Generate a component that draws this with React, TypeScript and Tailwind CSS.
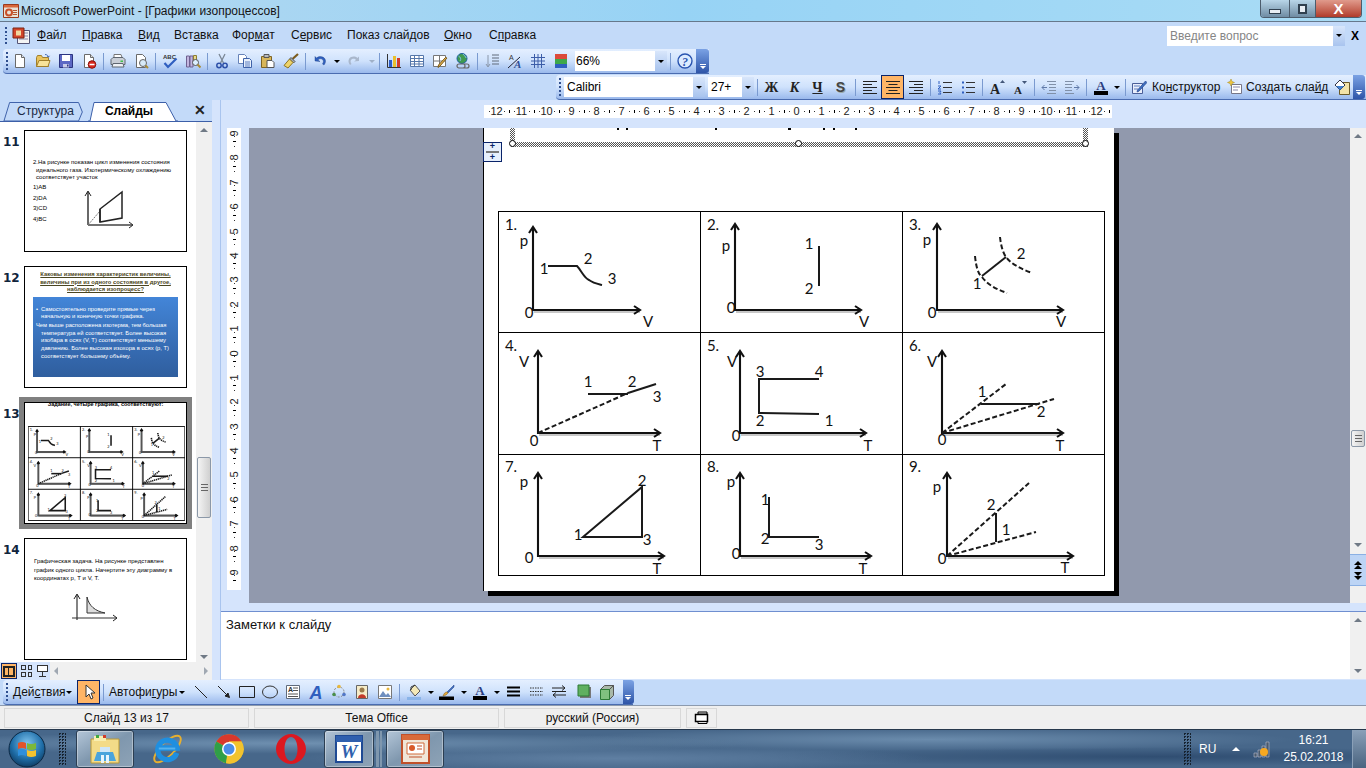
import React from "react";

type TextItem = [number, number, string];
type Cell = {
  x: number; y: number; h: number; ax: number; top: number; ay: number; right: number;
  t: TextItem[]; solid: string[]; dash: string[];
};

const cells: Cell[] = [
  { x: 499, y: 212, h: 120, ax: 533, top: 227, ay: 310, right: 640,
    t: [[511, 230, "1."], [524, 246, "p"], [544, 274, "1"], [588, 264, "2"], [612, 284, "3"], [529, 318, "0"], [648, 327, "V"]],
    solid: ["M548 266H577C581 270 584 278 589 280C593 283 598 284 602 285"], dash: [] },
  { x: 701, y: 212, h: 120, ax: 735, top: 224, ay: 310, right: 861,
    t: [[713, 230, "2."], [726, 251, "p"], [809, 249, "1"], [809, 294, "2"], [731, 313, "0"], [864, 327, "V"]],
    solid: ["M819 246V286"], dash: [] },
  { x: 903, y: 212, h: 120, ax: 937, top: 224, ay: 310, right: 1063,
    t: [[915, 230, "3."], [927, 245, "p"], [977, 289, "1"], [1021, 259, "2"], [932, 318, "0"], [1061, 327, "V"]],
    solid: ["M982 276L1006 257"],
    dash: ["M975 256C976 266 978 274 982 277C988 285 996 289 1007 293", "M1000 237C1001 246 1003 253 1006 257C1012 265 1022 269 1032 273"] },
  { x: 499, y: 333, h: 121, ax: 538, top: 351, ay: 433, right: 660,
    t: [[511, 351, "4."], [524, 367, "V"], [534, 446, "0"], [657, 451, "T"], [588, 387, "1"], [632, 387, "2"], [657, 402, "3"]],
    solid: ["M588 394H628", "M628 393L656 384"], dash: ["M538 433L628 393"] },
  { x: 701, y: 333, h: 121, ax: 740, top: 351, ay: 433, right: 866,
    t: [[713, 351, "5."], [732, 367, "V"], [736, 441, "0"], [868, 451, "T"], [760, 377, "3"], [819, 377, "4"], [760, 426, "2"], [829, 426, "1"]],
    solid: ["M819 379H759V413L819 414"], dash: [] },
  { x: 903, y: 333, h: 121, ax: 942, top: 351, ay: 433, right: 1063,
    t: [[915, 351, "6."], [932, 367, "V"], [942, 445, "0"], [1060, 451, "T"], [982, 397, "1"], [1041, 417, "2"]],
    solid: ["M981 404H1039"], dash: ["M942 433L1006 384", "M942 433L1054 399"] },
  { x: 499, y: 455, h: 120, ax: 538, top: 473, ay: 556, right: 664,
    t: [[511, 472, "7."], [524, 487, "p"], [529, 563, "0"], [657, 574, "T"], [578, 540, "1"], [642, 486, "2"], [647, 545, "3"]],
    solid: ["M583 537L642 487V537Z"], dash: [] },
  { x: 701, y: 455, h: 120, ax: 740, top: 473, ay: 556, right: 871,
    t: [[713, 472, "8."], [731, 487, "p"], [736, 559, "0"], [863, 574, "T"], [765, 505, "1"], [765, 544, "2"], [819, 550, "3"]],
    solid: ["M769 497V537H819"], dash: [] },
  { x: 903, y: 455, h: 120, ax: 947, top: 473, ay: 556, right: 1073,
    t: [[915, 472, "9."], [937, 492, "p"], [942, 564, "0"], [1065, 573, "T"], [991, 510, "2"], [1006, 535, "1"]],
    solid: ["M996 513V542"], dash: ["M947 556L1029 483", "M947 556L1036 532"] },
];

function Plot({ c, thumb }: { c: Cell; thumb?: boolean }) {
  const k = thumb ? 3.6 : 1;
  const l = thumb ? 3 : 1;
  return (
    <g fill="none">
      <path d={`M${c.ax + 1} ${c.ay + 2}H${c.right}`} stroke="#b5b5b5" strokeWidth={1.5 * k} />
      <path d={`M${c.ax} ${c.top}V${c.ay}H${c.right}`} stroke={thumb ? "#555" : "#111"} strokeWidth={2.1 * k} />
      <path d={`M${c.ax - 4} ${c.top + 6}L${c.ax} ${c.top}L${c.ax + 4} ${c.top + 6}M${c.right - 6} ${c.ay - 4}L${c.right} ${c.ay}L${c.right - 6} ${c.ay + 4}`} stroke="#111" strokeWidth={2.1 * k} />
      {c.solid.map((d, i) => <path key={i} d={d} stroke="#1a1a1a" strokeWidth={2 * l} />)}
      {c.dash.map((d, i) => <path key={i} d={d} stroke="#1a1a1a" strokeWidth={2 * l} strokeDasharray="5 2.5" />)}
      {c.t.map(([x, y, s], i) => (
        <text key={i} x={x} y={y} textAnchor="middle" fontSize={15} fill="#111" stroke="none" fontFamily="Lato, sans-serif">{s}</text>
      ))}
    </g>
  );
}

function SlideTable() {
  return (
    <div className="grid w-[607px] grid-cols-[202px_202px_202px] grid-rows-[121px_122px_121px] border-l border-t border-black">
      {cells.map((c, i) => (
        <div key={i} className="border-b border-r border-black">
          <svg className="block h-full w-full" viewBox={`${c.x} ${c.y} 201 ${c.h}`}><Plot c={c} /></svg>
        </div>
      ))}
    </div>
  );
}

function ThumbTable() {
  return (
    <svg className="block h-[95px] w-[157px]" viewBox="498 211 607 365">
      <path d="M498.5 211.5H1104.5V575.5H498.5ZM700.5 211V575M902.5 211V575M498 332.5H1105M498 454.5H1105" fill="none" stroke="#000" strokeWidth="3.6" />
      {cells.map((c, i) => <Plot key={i} c={c} thumb />)}
    </svg>
  );
}

const Ic = ({ children, s = 16 }: { children: React.ReactNode; s?: number }) => (
  <svg width={s} height={s} viewBox="0 0 16 16" className="block shrink-0">{children}</svg>
);

const Page = ({ f = "#fff" }: { f?: string }) => <path d="M3.5 1.5h6l3 3v10h-9z" fill={f} stroke="#6a6a6a" />;

const icons: Record<string, React.ReactNode> = {
  new: <><Page /><path d="M9.5 1.5v3h3" fill="#dfe6f2" stroke="#6a6a6a" /></>,
  open: <><path d="M1.5 4.5l1-2h4l1 2h6v9h-12z" fill="#e9c35c" stroke="#a17f2b" /><path d="M1.5 13.5l2.5-6h11l-2 6z" fill="#f8e39a" stroke="#a17f2b" /><path d="M10 1.5c2 0 3 1 3.5 2.5M13.5 4l1-1.2M13.5 4l-1.4-.5" fill="none" stroke="#4b6fb5" /></>,
  save: <><path d="M1.5 1.5h13v13h-13z" fill="#5c68c4" stroke="#2c3580" /><path d="M4 2h8v6H4z" fill="#fff" /><path d="M5 11h6v3.500H5z" fill="#c8cce8" /><path d="M9 11.500h1.500v2H9z" fill="#2c3580" /></>,
  perm: <><Page /><path d="M9.500 1.500v3h3" fill="#ddd" stroke="#6a6a6a" /><circle cx="11" cy="11.500" r="3.800" fill="#d9281e" stroke="#8a120c" /><path d="M8.500 11.500h5" stroke="#fff" strokeWidth="1.500" /></>,
  print: <><path d="M4 1.500h7l1 3H4z" fill="#fff" stroke="#777" /><path d="M1 6.500l2-2h10l2 2v5H1z" fill="#c9ced6" stroke="#5f6670" /><path d="M3 10.500h10l1 3.500H2z" fill="#eef1f5" stroke="#5f6670" /><path d="M10.500 7.500h2.500v1.500h-2.500z" fill="#42c24a" /></>,
  preview: <><Page /><circle cx="10" cy="10" r="3.500" fill="#d7eaf8" stroke="#666" /><path d="M12.500 12.500l2.500 2.500" stroke="#a98b35" strokeWidth="2" /></>,
  spell: <><text x="1" y="5.500" fontSize="6" fontFamily="Liberation Sans" fill="#333" fontWeight="700">ABC</text><path d="M2.500 10l3.500 4L14.500 5.500" fill="none" stroke="#2f5fc0" strokeWidth="2.200" /></>,
  research: <><path d="M1.500 3h3v11h-3zM5 3h3v11H5z" fill="#c3b6e0" stroke="#6f6190" /><path d="M8.500 2.500h3v5h-3z" fill="#e8d88f" stroke="#8d7d30" /><circle cx="10.500" cy="9.500" r="3" fill="#dcefff" stroke="#555" /><path d="M12.500 11.500l3 3" stroke="#a98b35" strokeWidth="2" /></>,
  cut: <><path d="M5 1l4.500 9M11 1L6.500 10" stroke="#7b8794" strokeWidth="1.300" fill="none" /><circle cx="5" cy="12.500" r="2.200" fill="none" stroke="#2d50a8" strokeWidth="1.500" /><circle cx="11" cy="12.500" r="2.200" fill="none" stroke="#2d50a8" strokeWidth="1.500" /></>,
  copy: <><path d="M1.500 1.500h6l2 2v7h-8z" fill="#fff" stroke="#6783b8" /><path d="M6.500 5.500h6l2 2v7h-8z" fill="#e8f0fc" stroke="#3f62a8" /><path d="M8 9h5M8 11h5M8 13h5" stroke="#5c7fc0" /></>,
  paste: <><path d="M1.500 3.500h10v11h-10z" fill="#d8b65a" stroke="#7e6423" /><path d="M4 1.500h5v3H4z" fill="#bbb" stroke="#555" /><path d="M7 7.500h5l2 2v5H7z" fill="#fff" stroke="#555" /></>,
  brush: <><path d="M15 1l-5.500 5" stroke="#7c5c1e" strokeWidth="2.200" /><path d="M8 4.500l4 4-1.500 1.500-4-4z" fill="#a3abb8" stroke="#555" /><path d="M6.500 6l3.500 3.500L5 15 1 12.500z" fill="#eed36a" stroke="#8c7423" /></>,
  undo: <path d="M3 8V3.500L4.500 5C7 3 11 3 13 6c1 2 .5 4-1 6l-1.500-1c1-1.500 1.200-3 .5-4-1-1.500-4-1.800-5 0L8 8.500z" fill="#2f5fbe" stroke="#1d3e86" strokeWidth=".4" />,
  redo: <path d="M13 8V3.500L11.500 5C9 3 5 3 3 6c-1 2-.5 4 1 6l1.500-1c-1-1.500-1.200-3-.5-4 1-1.500 4-1.800 5 0L8 8.500z" fill="#a9b7cc" />,
  chart: <><path d="M1.500 1v13.500H15" fill="none" stroke="#333" /><path d="M3 7h3v7H3z" fill="#2c5dc9" /><path d="M7 3h3v11H7z" fill="#e8c02f" /><path d="M11 5h3v9h-3z" fill="#d23c28" /></>,
  table: <path d="M1.500 2.500h13v11h-13zM1.500 5.500h13M1.500 8.500h13M1.500 11h13M5.500 2.500v11M10 2.500v11" fill="#fff" stroke="#5577aa" />,
  tableb: <><path d="M1.500 2.500h12v11h-12zM1.500 8h12M7.500 2.500v11" fill="#fff" stroke="#777" /><path d="M15 5l-7 8-2 1.500.5-2.500 7-7.500z" fill="#e8b44b" stroke="#7a5b1e" /></>,
  link: <><circle cx="7" cy="5.500" r="5" fill="#3f9a4f" stroke="#1f5fa0" /><path d="M3.500 3c2 1 3 3 1.500 5M8 1c1 2 3 2 3 4" stroke="#7ec0e8" fill="none" /><path d="M4 11h4a2 2 0 010 4H4a2 2 0 010-4zM8 11h4a2 2 0 010 4H8" fill="none" stroke="#666" strokeWidth="1.200" /></>,
  expand: <><path d="M4 2v11M2 11l2 3 2-3" fill="none" stroke="#8a97aa" /><path d="M8 2h7M8 5h7M8 8h7M8 11h7" stroke="#606a7a" /></>,
  showf: <><text x="2" y="6.500" fontSize="7" fontFamily="Liberation Sans" fill="#333">A</text><text x="7" y="14.500" fontSize="11" fontStyle="italic" fontWeight="700" fontFamily="Liberation Serif" fill="#2f4f96">A</text><path d="M1 15L13 4" stroke="#223" /></>,
  grid: <path d="M1 4.500h14M1 8h14M1 11.500h14M4.500 1v14M8 1v14M11.500 1v14" stroke="#3c5da8" fill="none" />,
  color: <><path d="M2 1h12v5H2z" fill="#dc4a3a" /><path d="M2 6h12v5H2z" fill="#3ea84a" /><path d="M2 11h12v4H2z" fill="#2f5fc0" /></>,
  help: <><circle cx="8" cy="8" r="7" fill="#dcebff" stroke="#2a55b0" strokeWidth="1.400" /><text x="8" y="12.500" textAnchor="middle" fontSize="12" fontWeight="700" fontStyle="italic" fontFamily="Liberation Serif" fill="#2a55b0">?</text></>,
  left: <path d="M1 2.500h14M1 5.500h9M1 8.500h14M1 11.500h9M1 14.500h14" stroke="#222" fill="none" />,
  center: <path d="M1 2.500h14M3.500 5.500h9M1 8.500h14M3.500 11.500h9M1 14.500h14" stroke="#222" fill="none" />,
  right: <path d="M1 2.500h14M6 5.500h9M1 8.500h14M6 11.500h9M1 14.500h14" stroke="#222" fill="none" />,
  num: <><path d="M6 3.500h9M6 8.500h9M6 13.500h9" stroke="#333" /><path d="M2 2v3M1 7h3l-3 3h3M1 12h3l-1 1.500 1 1.500H1" stroke="#2f5fc0" fill="none" /></>,
  bul: <><path d="M6 3.500h9M6 8.500h9M6 13.500h9" stroke="#333" /><path d="M2 2.500h2v2H2zM2 7.500h2v2H2zM2 12.500h2v2H2z" fill="#2f5fc0" /></>,
  ainc: <><text x="1" y="14.500" fontSize="14" fontWeight="700" fontFamily="Liberation Serif" fill="#222">A</text><path d="M11 4l2.500-3L16 4z" fill="#44587a" /></>,
  adec: <><text x="2" y="14.500" fontSize="11" fontWeight="700" fontFamily="Liberation Serif" fill="#222">A</text><path d="M10 2l2.500 3L15 2z" fill="#44587a" /></>,
  out: <><path d="M6 2.500h9M8 5.500h7M8 8.500h7M8 11.500h7M6 14.500h9" stroke="#8090a8" /><path d="M6 8.500L1 8.500M3.500 6L1 8.500 3.500 11" stroke="#5f79a8" fill="none" /></>,
  ind: <><path d="M1 2.500h9M1 5.500h7M1 8.500h7M1 11.500h7M1 14.500h9" stroke="#8090a8" /><path d="M10 8.500h5M12.500 6L15 8.500 12.500 11" stroke="#5f79a8" fill="none" /></>,
  fontc: <><text x="8" y="11" textAnchor="middle" fontSize="13" fontWeight="700" fontFamily="Liberation Serif" fill="#2a3d80">A</text><path d="M1 12h14v4H1z" fill="#000" /></>,
  design: <><path d="M1.500 4.500h10v10h-10z" fill="#e9eefb" stroke="#4a5f99" /><path d="M3 7h6M3 10h4" stroke="#5c7fc0" /><path d="M14.500 2L6.500 11l-.5 2 2-.8 8-8.700z" fill="#3f6fbe" stroke="#1e3e86" strokeWidth=".6" /></>,
  newsl: <><path d="M4.500 5.500h10v9h-10z" fill="#fff" stroke="#778" /><path d="M6 8h7M6 11h5" stroke="#88a" /><path d="M4 0l1 2.500L7.500 3.500 5 4.500 4 7 3 4.500.5 3.500 3 2.500z" fill="#f0c63c" stroke="#a78a20" strokeWidth=".5" /></>,
  scheme: <><path d="M5.500 3.500h10v12h-10z" fill="#f3e3a8" stroke="#6a5a2a" /><path d="M1 6l5-5 5 5-5 5z" fill="#fff" stroke="#334" /><path d="M2 7l4 4 4-4z" fill="#3f7fd0" /></>,
  fillp: <><path d="M4 6l5-5 5 6-5 5z" fill="#f3e9b8" stroke="#555" /><path d="M9 1L5 3v3" fill="none" stroke="#333" /><path d="M1 13h14v3H1z" fill="#8ab4e8" /></>,
  linec: <><path d="M15 1L8 8l1 1 6-6z" fill="#3f6fbe" stroke="#1e3e86" strokeWidth=".5" /><path d="M8 8c-2 0-3 1.500-4 4 2.500-.5 4-1.500 5-3z" fill="#e3a93c" stroke="#805a15" strokeWidth=".5" /><path d="M0 12.500h15V16H0z" fill="#000" /></>,
  lines: <path d="M2 3.500h13M2 7.500h13M2 11.500h13" stroke="#000" strokeWidth="2.200" />,
  dashes: <path d="M2 4h13M2 7.500h13M2 11h13" stroke="#333" strokeDasharray="1.500 1" />,
  arrows: <path d="M1 4h13M11 1.500L14 4l-3 2.500M15 11H2M5 8.500L2 11l3 2.500M1 7.500h14" stroke="#222" fill="none" />,
  shadow: <><path d="M4 3h11v11H4z" fill="#777" /><path d="M2 1h11v11H2z" fill="#60b060" stroke="#2c7a35" /></>,
  d3: <><path d="M1.500 5.500l4-4h9l-4 4zM10.500 5.500l4-4v10l-4 4z" fill="#a8b8a8" stroke="#555" /><path d="M1.500 5.500h9v10h-9z" fill="#7fc07f" stroke="#2c7a35" /></>,
  straight: <path d="M2 2l12 12" stroke="#222" fill="none" />,
  arrow: <path d="M2 2l11 11M13.500 13.500L9 12l3-3z" stroke="#222" fill="#222" />,
  rect: <path d="M.5 2.500h15v11H.5z" fill="none" stroke="#222" />,
  ell: <ellipse cx="8" cy="8" rx="7.500" ry="6" fill="none" stroke="#333" />,
  textb: <><path d="M1.500 1.500h13v13h-13z" fill="#fff" stroke="#5f6b7c" /><text x="3" y="8" fontSize="7" fontWeight="700" fontFamily="Liberation Sans" fill="#333">A</text><path d="M8 4h5M8 6.500h5M3 10h10M3 12.500h10" stroke="#555" /></>,
  word: <text x="8" y="14.500" textAnchor="middle" fontSize="18" fontWeight="700" fontStyle="italic" fontFamily="Liberation Sans" fill="#2f5fbe">A</text>,
  diag: <><circle cx="8" cy="8" r="5" fill="none" stroke="#888" strokeDasharray="2 1.500" /><circle cx="8" cy="2.500" r="1.800" fill="#e8b73c" /><circle cx="3" cy="10.500" r="1.800" fill="#4a8f4a" /><circle cx="13" cy="10.500" r="1.800" fill="#5277c8" /></>,
  clip: <><path d="M2.500 1.500h11v13h-11z" fill="#f6ecc8" stroke="#666" /><circle cx="8" cy="6" r="2.500" fill="#9a7a4a" /><path d="M4 14c0-5 8-5 8 0z" fill="#c23a2a" /></>,
  pic: <><path d="M1.500 1.500h13v13h-13z" fill="#fff" stroke="#777" /><path d="M2 13l4-6 3 4 2-2 3 4z" fill="#6f8fbf" /><circle cx="11" cy="5" r="1.500" fill="#e8b73c" /></>,
  pointer: <path d="M5 1v12l3-3 2 5 2-1-2-5h4z" fill="#fff" stroke="#333" />,
};

const I = ({ n }: { n: string }) => <Ic>{icons[n]}</Ic>;
const B = ({ n }: { n: string }) => <div className="flex h-full w-[23px] shrink-0 items-center justify-center"><I n={n} /></div>;
const S = () => <div className="flex h-full w-[6px] shrink-0 items-center justify-center"><div className="h-[17px] w-px bg-[#7a9ad0]" /></div>;
const D = ({ dim }: { dim?: boolean }) => (
  <div className="flex h-full w-[10px] shrink-0 items-center justify-center">
    <div className={`h-0 w-0 border-x-[3px] border-t-[3px] border-x-transparent ${dim ? "border-t-[#9fb0c8]" : "border-t-black"}`} />
  </div>
);
const Grip = () => (
  <div className="flex h-full w-[5.5px] shrink-0 flex-col items-center justify-center gap-[2px] pl-[2px]">
    {[0, 1, 2, 3, 4].map((i) => <div key={i} className="h-[2px] w-[2px] bg-[#2f4f8f]" />)}
  </div>
);
const Chevron = ({ w }: { w: string }) => (
  <div className={`flex h-full ${w} shrink-0 flex-col items-center justify-end gap-[1px] rounded-r-[3px] bg-gradient-to-b from-[#7ba2e4] to-[#2f55a8] pb-[4px]`}>
    <div className="h-px w-[6px] bg-white" />
    <div className="h-0 w-0 border-x-[3px] border-t-[3px] border-x-transparent border-t-white" />
  </div>
);
const barBg = "bg-gradient-to-b from-[#e4efff] via-[#cfe2fc] to-[#9ab9ec] border-b border-[#4a6cb0]";

const ComboArrow = () => (
  <div className="flex h-full w-[12px] shrink-0 items-center justify-center bg-gradient-to-b from-[#d8e6fb] to-[#a9c4ee]">
    <div className="h-0 w-0 border-x-[3px] border-t-[3px] border-x-transparent border-t-black" />
  </div>
);

const U = ({ children }: { children: React.ReactNode }) => <span className="underline">{children}</span>;

function TitleBar() {
  return (
    <div className="flex h-[22px] items-start border-b border-[#66788c] bg-gradient-to-r from-[#b5d8f0] via-[#97d3f5] to-[#a9dcf5] pr-[4px]">
      <svg width="16" height="16" viewBox="0 0 16 16" className="ml-[3px] mt-[3px] block shrink-0">
        <path d="M.5 1.500h15v13H.5z" fill="#e9e2d6" stroke="#9a3a1c" />
        <path d="M1 2h14v2.500H1z" fill="#d9673a" />
        <circle cx="6" cy="9.500" r="3" fill="none" stroke="#c8502a" strokeWidth="2" />
        <path d="M10 7.500h4M10 9.500h4M10 11.500h4" stroke="#b5542e" />
      </svg>
      <div className="ml-[2px] mt-[2px] text-[12px] leading-[18px] text-[#141414]">Microsoft PowerPoint - [Графики изопроцессов]</div>
      <div className="ml-auto flex h-[18px] w-[102px] overflow-hidden rounded-b-[4px] border border-t-0 border-[#4c5c6c]">
        <div className="flex w-[28px] items-center justify-center bg-gradient-to-b from-[#b9d6e8] to-[#6f8ca3]"><div className="mt-[5px] h-[5px] w-[12px] border border-[#30404f] bg-[#e8eef4]" /></div>
        <div className="flex w-[27px] items-center justify-center border-x border-[#4c5c6c] bg-gradient-to-b from-[#b9d6e8] to-[#6f8ca3]"><div className="h-[10px] w-[9px] border-2 border-[#30404f] bg-[#e8eef4]" /></div>
        <div className="flex flex-1 items-center justify-center bg-gradient-to-b from-[#e09a8c] to-[#b03a2a] text-[15px] font-bold leading-none text-white">X</div>
      </div>
    </div>
  );
}

function MenuBar() {
  const m: [React.ReactNode, string][] = [
    [<><U>Ф</U>айл</>, "w-[45px]"],
    [<><U>П</U>равка</>, "w-[56px]"],
    [<><U>В</U>ид</>, "w-[36px]"],
    [<>Вст<U>а</U>вка</>, "w-[58px]"],
    [<>Фор<U>м</U>ат</>, "w-[59px]"],
    [<>С<U>е</U>рвис</>, "w-[56px]"],
    [<>Показ слай<U>д</U>ов</>, "w-[97px]"],
    [<><U>О</U>кно</>, "w-[45px]"],
    [<>С<U>п</U>равка</>, "w-[60px]"],
  ];
  return (
    <div className="flex h-[27px] items-center bg-[#c3daf9] text-[12px] text-[#111]">
      <div className="ml-[2px] mr-[4px] h-[17px]"><Grip /></div>
      <svg width="18" height="17" viewBox="0 0 18 17" className="block shrink-0">
        <path d="M5.500 3.500h12v13h-12z" fill="#f4f4f4" stroke="#557" />
        <path d="M7 6h9M7 9h9M7 12h9" stroke="#88a" />
        <path d="M1 1h11v10H1z" fill="#d2452a" stroke="#7a2414" />
        <path d="M4 3.500h5v5H4z" fill="#f2d9a0" />
      </svg>
      <div className="ml-[7.500px] flex pb-[2px]">
        {m.map(([t, w], i) => <div key={i} className={w}>{t}</div>)}
      </div>
      <div className="ml-auto flex h-[20px] w-[178px] items-center bg-white pl-[3px] text-[#858585]">
        Введите вопрос
        <div className="ml-auto h-full"><ComboArrow /></div>
      </div>
      <div className="mx-[6px] w-[9px] text-[12px] font-bold text-black">X</div>
    </div>
  );
}

function Toolbar1() {
  return (
    <div className={`ml-[3px] flex h-[25px] w-[706px] items-center overflow-hidden rounded-l-[4px] ${barBg}`}>
      <Grip />
      <B n="new" /><B n="open" /><B n="save" /><B n="perm" /><S />
      <B n="print" /><B n="preview" /><S />
      <B n="spell" /><B n="research" /><S />
      <B n="cut" /><B n="copy" /><B n="paste" /><B n="brush" /><S />
      <B n="undo" /><D />
      <div className="flex h-full w-[25px] shrink-0 items-center justify-center"><I n="redo" /></div><D dim /><S />
      <B n="chart" /><B n="table" /><B n="tableb" /><B n="link" /><S />
      <B n="expand" /><B n="showf" /><B n="grid" /><B n="color" />
      <div className="ml-[2.5px] flex h-[20px] w-[92px] shrink-0 items-center bg-white pl-[1px] text-[12px] text-black">66%<div className="ml-auto h-full"><ComboArrow /></div></div>
      <S /><B n="help" />
      <Chevron w="w-[13px]" />
    </div>
  );
}

function Toolbar2() {
  const sym = (c: React.ReactNode, cls: string) => <div className={`flex h-full w-[23px] shrink-0 items-center justify-center text-[14px] font-bold text-[#222] ${cls}`}>{c}</div>;
  return (
    <div className={`ml-[556px] mt-px flex h-[25px] w-[810px] items-center overflow-hidden rounded-l-[4px] ${barBg}`}>
      <div className="w-[8px] shrink-0"><Grip /></div>
      <div className="flex h-[20px] w-[141px] shrink-0 items-center bg-white pl-[3px] text-[12px] text-black">Calibri<div className="ml-auto h-full"><ComboArrow /></div></div>
      <div className="ml-[3px] flex h-[20px] w-[46px] shrink-0 items-center bg-white pl-[3px] text-[12px] text-black">27+<div className="ml-auto h-full"><ComboArrow /></div></div>
      <S />
      {sym("Ж", "font-serif")}{sym(<i>К</i>, "font-serif")}{sym(<u>Ч</u>, "font-serif")}
      {sym(<span className="text-[#444] [text-shadow:1px_1px_0_#9aa]">S</span>, "")}
      <S />
      <B n="left" />
      <div className="flex h-[24px] w-[23px] shrink-0 items-center justify-center border border-[#0a246a] bg-[#ffb566]"><I n="center" /></div>
      <B n="right" /><S />
      <B n="num" /><B n="bul" /><S />
      <B n="ainc" /><B n="adec" /><S />
      <B n="out" /><B n="ind" /><S />
      <B n="fontc" /><D /><S />
      <div className="flex h-full w-[99px] shrink-0 items-center gap-[4px] pl-[3px] text-[12px] text-[#111]"><I n="design" /><span className="ml-px whitespace-nowrap">Ко<U>н</U>структор</span></div>
      <div className="flex h-full w-[103px] shrink-0 items-center gap-[3px] text-[12px] text-[#111]"><I n="newsl" /><span className="whitespace-nowrap">Создать сла<U>й</U>д</span></div>
      <B n="scheme" />
      <Chevron w="w-[12px]" />
    </div>
  );
}

function HRuler() {
  const labels = [12, 11, 10, 9, 8, 7, 6, 5, 4, 3, 2, 1, 0, 1, 2, 3, 4, 5, 6, 7, 8, 9, 10, 11, 12];
  return (
    <div className="ml-[263px] mt-[5px] flex h-[13px] w-[628px] items-center bg-white pl-[.5px] text-[11px] leading-none text-[#222]">
      {labels.map((n, i) => (
        <div key={i} className="flex w-[25px] shrink-0 items-center">
          <span className="ml-[4px] h-px w-px bg-[#333]" />
          <span className="flex-1 text-center">{n}</span>
          <span className="mr-[4px] h-px w-px bg-[#333]" />
          <span className="h-[3px] w-px bg-black" />
        </div>
      ))}
    </div>
  );
}

function VRuler() {
  const labels = [9, 8, 7, 6, 5, 4, 3, 2, 1, 0, 1, 2, 3, 4, 5, 6, 7, 8, 9];
  return (
    <div className="ml-[6px] mr-[8px] h-[462px] w-[14px] shrink-0 overflow-hidden bg-white text-[11px] leading-none text-[#222]">
      <div className="mt-[-10px] flex flex-col">
        {labels.map((n, i) => (
          <div key={i} className="flex h-[24.4px] shrink-0 flex-col items-center">
            <span className="mt-[4px] h-px w-px bg-[#333]" />
            <span className="flex flex-1 items-center [writing-mode:vertical-rl] rotate-180">{n}</span>
            <span className="mb-[4px] h-px w-px bg-[#333]" />
            <span className="h-px w-[3px] bg-black" />
          </div>
        ))}
      </div>
    </div>
  );
}

const Handle = ({ cls }: { cls: string }) => <div className={`absolute top-[12px] h-[7px] w-[7px] rounded-full border border-black bg-white ${cls}`} />;

function Slide() {
  return (
    <div className="ml-[234px] h-[463px] w-[631px] shrink-0 border-l border-black bg-white shadow-[5px_5px_0_#000]">
      <div className="relative ml-[26px] w-[578px]">
        <div className="h-[19px] bg-[repeating-conic-gradient(#555_0_25%,#fff_0_50%)] bg-[length:2px_2px] px-[5px] pb-[5px]">
          <div className="flex h-[14px] bg-white">
            <div className="ml-[102px] h-[2px] w-[2px] bg-black" />
            <div className="ml-[7px] h-[2px] w-[2px] bg-black" />
            <div className="ml-[87px] h-[2px] w-[2px] bg-black" />
            <div className="ml-[71px] h-[2px] w-[3px] bg-black" />
            <div className="ml-[32px] h-[2px] w-[2px] bg-black" />
            <div className="ml-[8px] h-[2px] w-[2px] bg-black" />
            <div className="ml-[20px] h-[2px] w-[2px] bg-black" />
          </div>
        </div>
        <Handle cls="left-[-1px]" /><Handle cls="left-[285px]" /><Handle cls="right-[-1px]" />
        <div className="absolute left-[-27px] top-[14px] flex h-[20px] w-[19px] flex-col items-center justify-center gap-[1px] border border-[#0a246a] bg-[#e6effc]">
          <div className="text-[9px] font-bold leading-[7px] text-[#0a246a]">+</div>
          <div className="h-[2px] w-[13px] border-y border-[#777]" />
          <div className="text-[9px] font-bold leading-[7px] text-[#0a246a]">+</div>
        </div>
      </div>
      <div className="ml-[14px] mt-[64px]"><SlideTable /></div>
    </div>
  );
}

const Up = () => <div className="h-0 w-0 border-x-[4px] border-b-[4px] border-x-transparent border-b-[#707a86]" />;
const Down = () => <div className="h-0 w-0 border-x-[4px] border-t-[4px] border-x-transparent border-t-[#707a86]" />;
const Thumbbar = ({ h }: { h: string }) => (
  <div className={`flex ${h} w-[14px] flex-col items-center justify-center gap-[2px] rounded-[2px] border border-[#8b98a8] bg-gradient-to-r from-[#f4f4f4] to-[#d0d0d0]`}>
    <div className="h-px w-[7px] bg-[#666]" /><div className="h-px w-[7px] bg-[#666]" /><div className="h-px w-[7px] bg-[#666]" />
  </div>
);

const Thumb = ({ n, children, active }: { n: number; children: React.ReactNode; active?: boolean }) => (
  <div className="flex h-[122px] shrink-0">
    <div className="w-[24px] pl-[3px] text-[12px] font-bold leading-[24px] text-[#10243c] [font-family:'DejaVu_Sans',sans-serif]">{n}</div>
    <div className={`h-[122px] w-[163px] overflow-hidden border border-black bg-white ${active ? "outline-[5px] outline-solid outline-[#808080]" : ""}`}>{children}</div>
  </div>
);

function Thumbs() {
  return (
    <div className="flex h-[540px] w-[196px] flex-col gap-[14px] overflow-hidden bg-white pt-[8px] text-black [font-family:'Liberation_Sans',sans-serif]">
      <Thumb n={11}>
        <div className="pl-[8px] pr-[12px] pt-[28px] text-[6px] leading-[7.700px]">
          <div className="pl-[3px] -indent-[3px]">2.На рисунке показан цикл изменения состояния идеального газа. Изотермическому охлаждению соответствует участок</div>
          <div className="flex">
            <div className="w-[51px] leading-[10.500px]">1)AB<br />2)DA<br />3)CD<br />4)BC</div>
            <svg width="56" height="44" viewBox="0 0 56 44" className="mt-[4px] block">
              <path d="M4 39V6M4 39H48" stroke="#444" strokeWidth="1.600" fill="none" />
              <path d="M1 10l3-5 3 5M45 36l4 3-4 3" stroke="#222" fill="none" />
              <path d="M4 39L16 25" stroke="#777" strokeDasharray="2 1" />
              <path d="M16 23L38 6V32L16 36Z" fill="none" stroke="#222" strokeWidth="1.500" />
              <path d="M16 23V36" stroke="#222" strokeWidth="1.500" />
            </svg>
          </div>
        </div>
      </Thumb>
      <Thumb n={12}>
        <div className="px-[8px] pt-[4px] text-center text-[5.800px] font-bold leading-[7.500px] text-[#4a4520] underline">Каковы изменения характеристик величины, величины при из одного состояния в другое, наблюдается изопроцесс?</div>
        <div className="mx-[8px] mt-[3px] h-[80px] bg-gradient-to-b from-[#4385d8] to-[#2f5e9e] pl-[3px] pr-[7px] pt-[9px] text-[5.800px] leading-[7.700px] text-white">
          <div className="flex gap-[3px]"><span>•</span><span>Самостоятельно проведите прямые через начальную и конечную точки графика.</span></div>
          <div className="mt-[1px] pl-[5px] -indent-[5px]">Чем выше расположена изотерма, тем большая температура ей соответствует. Более высокая изобара в осях (V, T) соответствует меньшему давлению. Более высокая изохора в осях (p, T) соответствует большему объёму.</div>
        </div>
      </Thumb>
      <Thumb n={13} active>
        <div className="-mt-[1px] text-center text-[5.500px] font-bold leading-[5px] text-black">Задание, четыре графика, соответствуют:</div>
        <div className="ml-[3px] mt-[19px]"><ThumbTable /></div>
      </Thumb>
      <Thumb n={14}>
        <div className="pl-[9px] pr-[12px] pt-[18px] text-[6px] leading-[8.500px]">Графическая задача. На рисунке представлен график одного цикла. Начертите эту диаграмму в координатах р, Т и V, Т.</div>
        <svg width="50" height="32" viewBox="0 0 50 32" className="ml-[46px] mt-[9px] block">
          <path d="M6 28V3M1 26H46" stroke="#333" strokeWidth="1.200" fill="none" />
          <path d="M3 7l3-5 3 5M42 23l4 3-4 3" stroke="#222" fill="none" />
          <path d="M16 5V21H34C24 19 18 14 16 5Z" fill="#ddd" stroke="#333" />
        </svg>
      </Thumb>
    </div>
  );
}

function Tab({ label, active, w }: { label: string; active?: boolean; w: string }) {
  return (
    <div className={`relative h-[19px] ${w} shrink-0`}>
      <svg className="absolute inset-0 h-full w-full" viewBox="0 0 90 19" preserveAspectRatio="none">
        <path d={active ? "M0 19H2L6 .5H78L88 19H90" : "M1 19L7 .5H80L84 10L80 19Z"} fill={active ? "#fff" : "#c3daf9"} stroke="#3c5fa8" />
      </svg>
      <div className={`relative text-center text-[12px] leading-[19px] ${active ? "pr-[8px] font-bold text-black" : "text-[#1a2a44]"}`}>{label}</div>
    </div>
  );
}

function LeftPane() {
  return (
    <div className="flex h-[580px] w-[220px] shrink-0 flex-col bg-[#d5e4fc]">
      <div className="flex h-[22px] w-[212px] items-end border-b border-[#3c5fa8] bg-[#c3daf9] pl-[3px]">
        <Tab label="Структура" w="w-[85px]" />
        <Tab label="Слайды" active w="w-[90px]" />
        <div className="mb-[3px] ml-[16px] text-[14px] font-bold leading-[16px] text-[#222]">✕</div>
      </div>
      <div className="flex h-[540px]">
        <Thumbs />
        <div className="flex w-[16px] flex-col items-center bg-[#f0f0f0] pb-[3px] pt-[6px]">
          <Up />
          <div className="mt-[325px]"><Thumbbar h="h-[61px]" /></div>
          <div className="mt-auto"><Down /></div>
        </div>
      </div>
      <div className="flex h-[18px] w-[212px] items-center">
        <div className="ml-px flex h-[16px] w-[16px] items-center justify-center border border-[#0a246a] bg-[#ffb566]">
          <div className="flex h-[11px] w-[12px] border-2 border-[#222]"><div className="h-full w-[4px] border-r border-[#222]" /></div>
        </div>
        <div className="ml-[2px] grid h-[16px] w-[15px] grid-cols-2 gap-[2px] p-[2px]">
          <div className="border border-[#333]" /><div className="border border-[#333]" /><div className="border border-[#333]" /><div className="border border-[#333]" />
        </div>
        <div className="flex h-[16px] w-[16px] flex-col items-center pt-[2px]">
          <div className="h-[7px] w-[11px] border border-[#333] bg-white" /><div className="h-[4px] w-px bg-[#333]" /><div className="h-px w-[7px] bg-[#333]" />
        </div>
        <div className="flex h-full flex-1 items-center justify-between bg-[#f0f0f0] px-[4px]">
          <div className="h-0 w-0 border-y-[4px] border-r-[4px] border-y-transparent border-r-[#a0a8b2]" />
          <div className="h-0 w-0 border-y-[4px] border-l-[4px] border-y-transparent border-l-[#a0a8b2]" />
        </div>
      </div>
    </div>
  );
}

function Workspace() {
  return (
    <div className="flex h-[580px] flex-1 flex-col border-l border-[#a9c4ee] bg-[#d5e4fc]">
      <div className="h-[28px]"><HRuler /></div>
      <div className="flex h-[475px]">
        <VRuler />
        <div className="h-full flex-1 overflow-hidden bg-[#9199ad]"><Slide /></div>
        <div className="flex w-[16px] flex-col items-center bg-[#f0f0f0] pt-[6px]">
          <Up />
          <div className="mt-[292px]"><Thumbbar h="h-[17px]" /></div>
          <div className="mt-[96px]"><Down /></div>
          <div className="mt-[7px] flex h-[32px] w-full flex-col items-center justify-center gap-[3px] border-y border-[#8ab0e4] bg-[#bcd4f5]">
            <div className="flex flex-col items-center"><div className="h-0 w-0 border-x-[4px] border-b-[4px] border-x-transparent border-b-black" /><div className="h-0 w-0 border-x-[4px] border-b-[4px] border-x-transparent border-b-black" /></div>
            <div className="flex flex-col items-center"><div className="h-0 w-0 border-x-[4px] border-t-[4px] border-x-transparent border-t-black" /><div className="h-0 w-0 border-x-[4px] border-t-[4px] border-x-transparent border-t-black" /></div>
          </div>
        </div>
      </div>
      <div className="h-[9px] border-b border-[#6f8fd0]" />
      <div className="flex h-[67px] bg-white">
        <div className="flex-1 pl-[5px] pt-[3px] text-[13px] leading-[20px] text-[#111]">Заметки к слайду</div>
        <div className="flex w-[16px] flex-col items-center justify-between bg-[#f0f0f0] py-[6px]"><Up /><Down /></div>
      </div>
    </div>
  );
}

function DrawBar() {
  return (
    <div className="h-[25px] bg-[#c3daf9] pl-[3px]">
      <div className={`flex h-[25px] w-[630px] items-center text-[12px] text-[#111] rounded-l-[4px] ${barBg}`}>
        <div className="w-[7px] shrink-0"><Grip /></div>
        <div className="ml-[3px] w-[51px] shrink-0 whitespace-nowrap">Дей<U>с</U>твия</div><D />
        <div className="ml-[3px] flex h-[24px] w-[23px] shrink-0 items-center justify-center border border-[#0a246a] bg-[#ffb566]"><I n="pointer" /></div>
        <S />
        <div className="ml-[3px] w-[68px] shrink-0 whitespace-nowrap">Автофи<U>г</U>уры</div><D />
        <div className="w-[2.500px] shrink-0" />
        <B n="straight" /><B n="arrow" /><B n="rect" /><B n="ell" /><B n="textb" /><B n="word" /><B n="diag" /><B n="clip" /><B n="pic" /><S />
        <B n="fillp" /><D /><B n="linec" /><D /><B n="fontc" /><D /><B n="lines" /><B n="dashes" /><B n="arrows" />
        <div className="w-[2px] shrink-0" />
        <B n="shadow" /><B n="d3" />
        <div className="w-[4px] shrink-0" />
        <Chevron w="w-[11px]" />
      </div>
    </div>
  );
}

function StatusBar() {
  const p = "flex h-[20px] items-center justify-center border border-[#d8d8d8] text-[12px] text-[#111]";
  return (
    <div className="flex h-[24px] items-center gap-[5px] border-t border-[#8c9aae] bg-[#efefef] pl-[4px]">
      <div className={`${p} w-[245px]`}>Слайд 13 из 17</div>
      <div className={`${p} w-[245px]`}>Тема Office</div>
      <div className={`${p} w-[177px]`}>русский (Россия)</div>
      <div className={`${p} w-[31px]`}>
        <svg width="16" height="14" viewBox="0 0 16 14"><path d="M1.500 3.500h12v7h-12z" fill="#fff" stroke="#000" strokeWidth="1.500" /><path d="M4 1h9v2H4zM4 10.500h9v2H4z" fill="#ddd" stroke="#000" /></svg>
      </div>
    </div>
  );
}

const TaskBtn = ({ w, cls, children }: { w: string; cls: string; children: React.ReactNode }) => (
  <div className={`flex h-[38px] ${w} ${cls} shrink-0 items-center justify-center rounded-[3px] border border-[#2c3e52] bg-gradient-to-br from-[#b4c6d8] via-[#7f97ae] to-[#8ea3b6] shadow-[inset_0_0_0_1px_rgba(255,255,255,.35)]`}>
    {children}
  </div>
);
const TGrip = () => <div className="h-[33px] w-[8px] shrink-0 bg-[conic-gradient(#16222f_25%,transparent_0)] bg-[length:3px_3px]" />;

function Taskbar() {
  return (
    <div className="flex h-[39px] items-center border-t border-[#26384c] bg-[#47678a] bg-[radial-gradient(ellipse_at_22%_35%,#6f90b0_0%,transparent_30%),radial-gradient(ellipse_at_45%_75%,#5f7fa2_0%,transparent_30%),radial-gradient(ellipse_at_68%_25%,#6a8bac_0%,transparent_28%),radial-gradient(ellipse_at_85%_70%,#304e72_0%,transparent_25%)]">
      <svg width="38" height="38" viewBox="0 0 38 38" className="ml-[8px] shrink-0">
        <defs>
          <radialGradient id="orb" cx=".5" cy=".35" r=".7"><stop offset="0" stopColor="#7fc4ee" /><stop offset=".6" stopColor="#1f6ea8" /><stop offset="1" stopColor="#0c3458" /></radialGradient>
        </defs>
        <circle cx="19" cy="19" r="18" fill="url(#orb)" stroke="#0b2844" />
        <path d="M10 13q4-2 8 0v6q-4-2-8 0z" fill="#e2542a" />
        <path d="M19 13q4 2 9 0v6q-5 2-9 0z" fill="#7bb83a" />
        <path d="M10 20q4-2 8 0v6q-4-2-8 0z" fill="#2f8fdc" />
        <path d="M19 20q4 2 9 0v6q-5 2-9 0z" fill="#f4c22e" />
      </svg>
      <div className="ml-[12px]"><TGrip /></div>
      <TaskBtn w="w-[58px]" cls="ml-[10px]">
        <svg width="34" height="32" viewBox="0 0 34 32"><path d="M3 6h28v24H3z" fill="#f3db88" stroke="#b89838" /><path d="M6 3h12v5H6z" fill="#f8eeb0" /><path d="M8 2h3v3H8z" fill="#3fa83f" /><path d="M15 2h3v3h-3z" fill="#d23c28" /><path d="M9 19h16l3 9H6z" fill="#4aa4dc" /><path d="M12 14h10v5H12z" fill="#cfe6f8" /><path d="M13 22h3v8h-3zM18 22h3v8h-3z" fill="#e8f4fc" /></svg>
      </TaskBtn>
      <div className="ml-[16.500px] flex w-[33px] shrink-0 justify-center">
        <svg width="34" height="34" viewBox="0 0 34 34">
          <ellipse cx="17" cy="17" rx="18" ry="7" transform="rotate(-45 17 17)" fill="none" stroke="#e8b02f" strokeWidth="2" />
          <path d="M26.500 21a10 10 0 11.300-5H8" fill="none" stroke="#1f8fe0" strokeWidth="5.500" />
          <path d="M8 16.500h17" stroke="#56b2ee" strokeWidth="2" />
        </svg>
      </div>
      <div className="ml-[30.500px] flex w-[30px] shrink-0 justify-center">
        <svg width="30" height="30" viewBox="0 0 30 30">
          <circle cx="15" cy="15" r="14.500" fill="#e8b522" />
          <path d="M15 15L2.400 7.600A14.500 14.500 0 0127.600 7.600H15z" fill="#d8382c" />
          <path d="M2.400 7.600A14.500 14.500 0 0012 29.200L15 15z" fill="#2f9f48" />
          <path d="M12 29.200A14.500 14.500 0 0027.600 7.600H15z" fill="#f2c32e" />
          <circle cx="15" cy="15" r="7" fill="#fff" /><circle cx="15" cy="15" r="5.500" fill="#4a8de8" />
        </svg>
      </div>
      <div className="ml-[31px] flex w-[32px] shrink-0 justify-center">
        <svg width="32" height="32" viewBox="0 0 32 32"><path fillRule="evenodd" d="M16 1c8 0 15 7 15 15s-7 15-15 15S1 24 1 16 8 1 16 1zm0 3c-4 0-6.500 5.500-6.500 12s2.500 12 6.500 12 6.500-5.500 6.500-12S20 4 16 4z" fill="#dc1820" /></svg>
      </div>
      <TaskBtn w="w-[50px]" cls="ml-[17px]">
        <svg width="28" height="30" viewBox="0 0 28 30"><path d="M1 2h26v26H1z" fill="#fff" stroke="#1f4a94" strokeWidth="2" /><path d="M1 2h26v6H1z" fill="#2f5fae" /><text x="14" y="24" textAnchor="middle" fontSize="19" fontWeight="700" fontStyle="italic" fontFamily="Liberation Serif" fill="#2f5fae">W</text></svg>
      </TaskBtn>
      <div className="ml-[2px] h-[36px] w-[3px] bg-[#7f97ae]" />
      <div className="ml-px h-[36px] w-[2px] bg-[#7f97ae]" />
      <TaskBtn w="w-[58px]" cls="ml-[4px]">
        <svg width="29" height="30" viewBox="0 0 29 30"><path d="M1 1h27v28H1z" fill="#f0e6d8" stroke="#c0502a" strokeWidth="2" /><path d="M1 1h27v5H1z" fill="#d86a3a" /><path d="M6 9h17v11H6z" fill="#fff" stroke="#d06a3a" /><circle cx="11" cy="14" r="3" fill="#d85a2a" /><path d="M16 12h5M16 15h5M8 23h13" stroke="#c0502a" /></svg>
      </TaskBtn>
      <div className="ml-auto"><TGrip /></div>
      <div className="ml-[8px] w-[26px] text-[12px] text-white">RU</div>
      <div className="ml-[7px] h-0 w-0 border-x-[4px] border-b-[4px] border-x-transparent border-b-white" />
      <svg width="18" height="18" viewBox="0 0 18 18" className="ml-[13px] shrink-0"><path d="M1 13h3v4H1zM5 10h3v7H5zM9 6h3v11H9zM13 2h3v15h-3z" fill="#4a5a6c" stroke="#ccd" strokeWidth=".5" /><circle cx="11" cy="12" r="4" fill="#f6a821" /></svg>
      <div className="ml-[9px] flex w-[67px] flex-col items-center text-[12px] leading-[17px] text-white">
        <div>16:21</div>
        <div>25.02.2018</div>
      </div>
      <div className="ml-[5px] h-full w-[14px] border-l border-[#8aa0b8] bg-gradient-to-b from-[#8aa0b8] to-[#4a6480]" />
    </div>
  );
}

export default function App() {
  return (
    <div className="flex h-[768px] w-[1366px] flex-col overflow-hidden bg-[#c3daf9] [font-family:'Liberation_Sans',sans-serif]">
      <TitleBar />
      <MenuBar />
      <Toolbar1 />
      <Toolbar2 />
      <div className="flex h-[580px]">
        <LeftPane />
        <Workspace />
      </div>
      <DrawBar />
      <StatusBar />
      <Taskbar />
    </div>
  );
}
